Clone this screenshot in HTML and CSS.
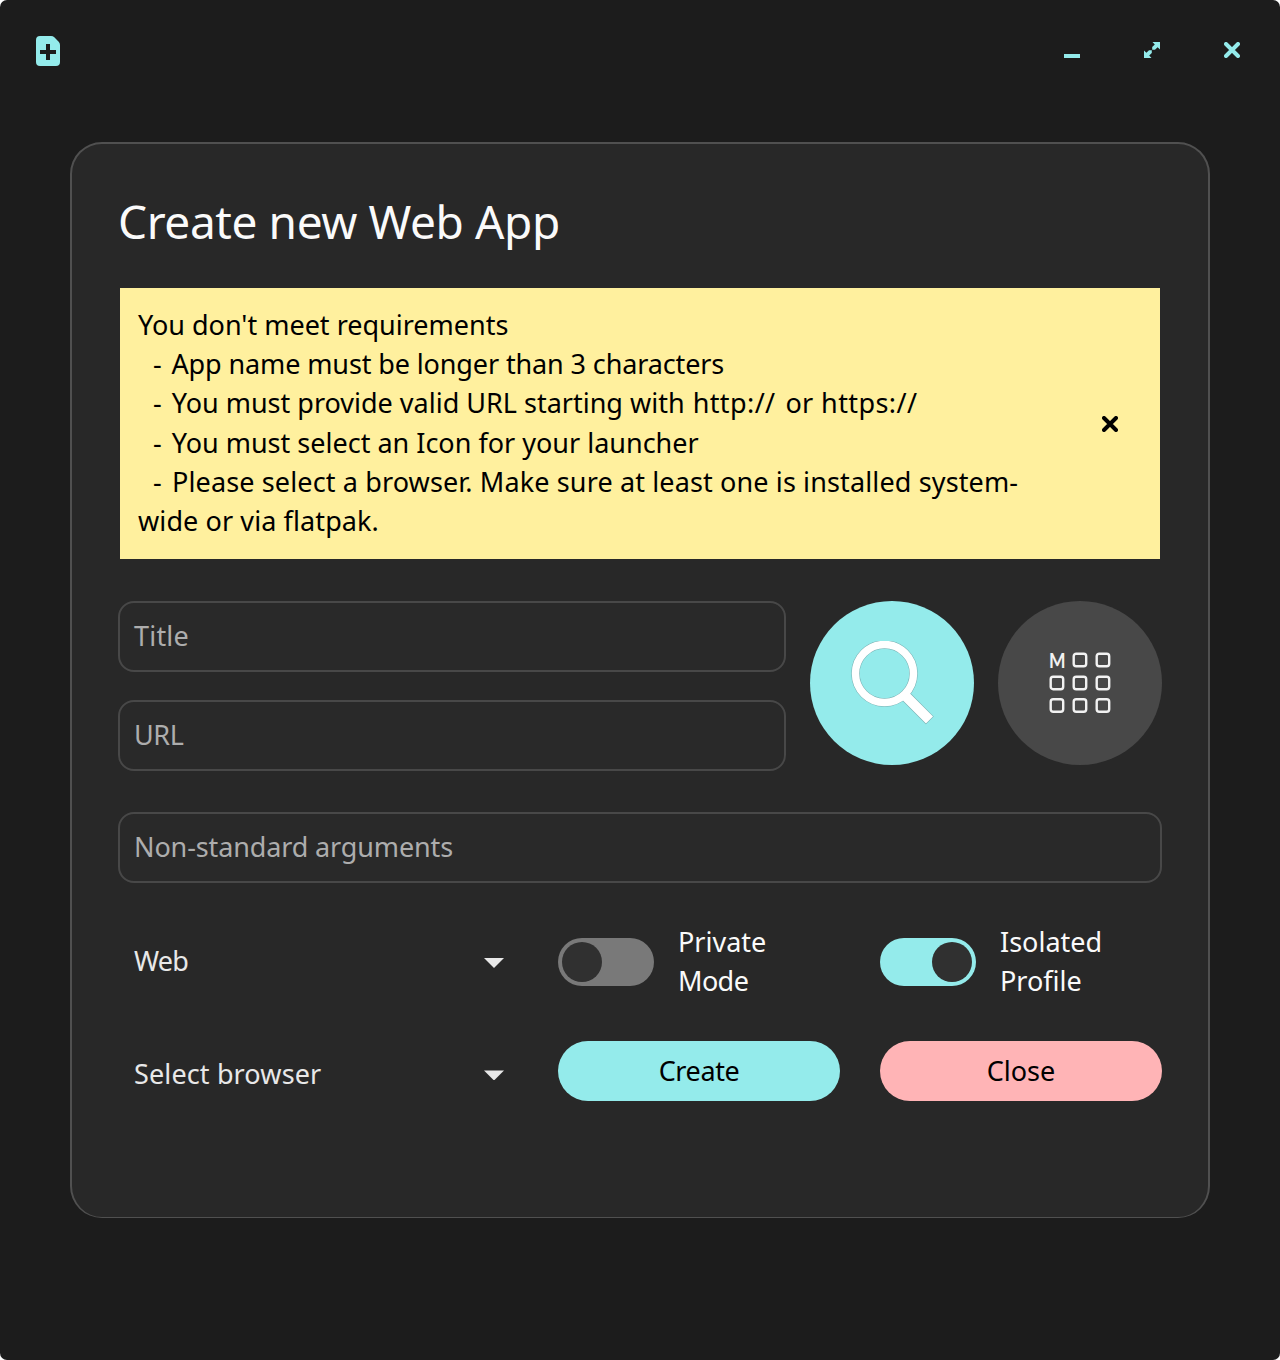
FILE: index.html
```html
<!DOCTYPE html>
<html lang="en">
<head>
<meta charset="utf-8">
<title>Create new Web App</title>
<link rel="stylesheet" href="styles.css">
</head>
<body>
<div class="window">
  <header class="titlebar">
    <button class="icon-button" aria-label="New app">
      <svg width="24" height="30" viewBox="0 0 24 30"><path fill="currentColor" fill-rule="evenodd" d="M4 0H15Q17 0 18.300 1.300L22.700 5.700Q24 7 24 9V26Q24 30 20 30H4Q0 30 0 26V4Q0 0 4 0ZM10 8V14H4V18H10V24H14V18H20V14H14V8Z"/></svg>
    </button>
    <div class="controls">
      <button class="icon-button" aria-label="Minimize">
        <svg width="16" height="16" viewBox="0 0 16 16"><path fill="currentColor" d="M0 12H16V16H0Z"/></svg>
      </button>
      <button class="icon-button" aria-label="Maximize">
        <svg width="16" height="16" viewBox="0 0 16 16"><path fill="currentColor" d="M8.500 0H16V7.500L13.600 5.200L11 7.800H8.200V5L10.800 2.400ZM0 8.500L2.400 10.800L5 8.200H7.800V11L5.200 13.600L7.500 16H0Z"/></svg>
      </button>
      <button class="icon-button" aria-label="Close window">
        <svg width="16" height="16" viewBox="0 0 16 16"><path stroke="currentColor" stroke-width="4" stroke-linecap="round" d="M2 2L14 14M14 2L2 14"/></svg>
      </button>
    </div>
  </header>

  <main class="card">
    <h1 class="heading">Create new Web App</h1>

    <section class="warning">
      <div class="warning-text">
        <p class="w1">You don't meet requirements</p>
        <p class="indent w2"><span class="dash">- </span>App name must be longer than 3 characters</p>
        <p class="indent w3"><span class="dash">- </span>You must provide valid URL starting with <span class="scheme">http://</span> or <span class="scheme">https://</span></p>
        <p class="indent w4"><span class="dash">- </span>You must select an Icon for your launcher</p>
        <p class="indent w5"><span class="dash">- </span>Please select a browser. Make sure at least one is installed system-</p>
        <p class="w6">wide or via flatpak.</p>
      </div>
      <button class="dismiss" aria-label="Dismiss">
        <svg width="16" height="16" viewBox="0 0 16 16"><path stroke="currentColor" stroke-width="4" stroke-linecap="round" d="M2 2L14 14M14 2L2 14"/></svg>
      </button>
    </section>

    <section class="identity">
      <div class="fields">
        <div class="field"><span class="t-title">Title</span></div>
        <div class="field"><span class="t-url">URL</span></div>
      </div>
      <button class="round search" aria-label="Find icon">
        <svg width="84" height="84" viewBox="0 0 84 84"><path class="lens-edge" d="M56 55.500L79.800 79.300"/><circle class="lens-edge" cx="34.500" cy="32.500" r="29"/><path class="lens" d="M56 55.500L79.500 79"/><circle class="lens" cx="34.500" cy="32.500" r="29"/></svg>
      </button>
      <button class="round apps" aria-label="Choose icon">
        <svg width="76" height="76" viewBox="-7 -7 76 76">
          <text class="apps-letter" x="0" y="15.500" textLength="16.500" lengthAdjust="spacingAndGlyphs">M</text>
          <g class="tiles">
            <rect x="24.700" y="1.700" width="12.500" height="12.500" rx="2.500"/><rect x="47.700" y="1.700" width="12.500" height="12.500" rx="2.500"/>
            <rect x="1.700" y="24.700" width="12.500" height="12.500" rx="2.500"/><rect x="24.700" y="24.700" width="12.500" height="12.500" rx="2.500"/><rect x="47.700" y="24.700" width="12.500" height="12.500" rx="2.500"/>
            <rect x="1.700" y="47.300" width="12.500" height="12.500" rx="2.500"/><rect x="24.700" y="47.300" width="12.500" height="12.500" rx="2.500"/><rect x="47.700" y="47.300" width="12.500" height="12.500" rx="2.500"/>
          </g>
        </svg>
      </button>
    </section>

    <div class="field arguments"><span class="t-args">Non-standard arguments</span></div>

    <section class="options">
      <div class="dropdown"><span class="t-web">Web</span><i class="arrow"></i></div>
      <div class="option"><span class="switch"><i class="knob"></i></span><span class="label"><span class="t-private">Private</span><span class="t-mode">Mode</span></span></div>
      <div class="option"><span class="switch on"><i class="knob"></i></span><span class="label"><span class="t-isolated">Isolated</span><span class="t-profile">Profile</span></span></div>
    </section>

    <section class="options actions">
      <div class="dropdown browser"><span class="t-browser">Select browser</span><i class="arrow"></i></div>
      <button class="pill create"><span class="t-create">Create</span></button>
      <button class="pill close"><span class="t-close">Close</span></button>
    </section>
  </main>
</div>
</body>
</html>
```
FILE: styles.css
```css
* { box-sizing: border-box; }
body { margin: 0; background: #fff; font-family: "Noto Sans", sans-serif; font-size: 27px; line-height: 39.2px; color: #fafafa; }
button { border: 0; padding: 0; background: none; color: inherit; font: inherit; }
svg { display: block; fill: none; }
p { margin: 0; }
span { white-space: nowrap; }
.window { width: 1280px; height: 1360px; border-radius: 7px; background: #1c1c1c; padding: 0 0 142px; }
.titlebar { height: 142px; padding: 35px 32px 0; display: flex; justify-content: space-between; align-items: flex-start; color: #94ebeb; }
.icon-button { width: 32px; height: 32px; display: grid; place-items: center; }
.controls { display: flex; gap: 48px; margin: -1px 0 0; }
.card { width: 1140px; height: 1076px; margin: 0 70px; padding: 56px 46px 0; border: 2px solid #505050; border-bottom-width: 1px; border-radius: 32px; background: #282828; }
.heading { margin: 0 0 56px; height: 32px; line-height: 42px; font-size: 46px; font-weight: 400; letter-spacing: -0.4px; white-space: nowrap; }
.warning { margin: 0 2px; height: 271px; padding: 17px 42px 0 18px; background: #fff09e; color: #000; display: flex; justify-content: space-between; }
.warning-text { white-space: nowrap; }
.indent { padding-left: 15px; }
.dash { margin-right: 3px; }
.w2 { letter-spacing: -0.12px; }
.w5 { letter-spacing: 0.13px; }
.w6 { letter-spacing: 0.1px; }
.scheme { margin: 0 3px 0 1px; letter-spacing: 0.4px; }
.dismiss { width: 16px; margin: 0 0 17px; display: grid; place-items: center; }
.identity { margin-top: 42px; display: grid; grid-template-columns: 668px 164px 164px; gap: 24px; height: 170px; }
.fields { display: flex; flex-direction: column; justify-content: space-between; }
.field { height: 71px; border: 2px solid #484848; border-radius: 16px; background: #292929; color: #adadad; padding: 0 14px 2px; display: flex; align-items: center; }
.t-title { letter-spacing: 0.2px; }
.t-url { letter-spacing: -0.4px; }
.t-args { letter-spacing: -0.13px; }
.t-web { letter-spacing: -0.8px; }
.t-mode { letter-spacing: -0.6px; }
.t-browser { letter-spacing: 0.13px; }
.t-create { letter-spacing: -0.4px; }
.round { width: 164px; height: 164px; border-radius: 50%; display: grid; place-items: center; }
.search { background: #94ebeb; }
.apps { background: #484848; }
.lens-edge { stroke: #74aeb0; stroke-width: 8.500; }
.lens { stroke: #fff; stroke-width: 7.500; }
path.lens { stroke-width: 10; }
path.lens-edge { stroke-width: 11; }
.apps-letter { font: 700 20px "Lato", sans-serif; fill: #f2f2f2; }
.tiles { stroke: #f2f2f2; stroke-width: 2.400; }
.arguments { margin-top: 41px; }
.options { display: grid; grid-template-columns: 400px 282px 282px; grid-template-rows: 78px; gap: 40px; height: 78px; margin-top: 40px; align-items: center; }
.dropdown { display: flex; align-items: center; justify-content: space-between; padding: 0 14px 2px 16px; color: #e8e8e8; }
.arrow { width: 20px; height: 10px; background: #e8e8e8; clip-path: polygon(0 0, 100% 0, 50% 100%); margin-top: 4px; }
.option { display: flex; align-items: center; gap: 24px; }
.switch { width: 96px; height: 48px; border-radius: 24px; padding: 4px; background: #797979; display: flex; }
.switch.on { background: #94ebeb; justify-content: flex-end; }
.knob { width: 40px; height: 40px; border-radius: 50%; background: #303030; }
.label { display: flex; flex-direction: column; padding-bottom: 2px; }
.actions { height: 60px; grid-template-rows: 60px; }
.browser { padding-top: 7px; }
.pill { height: 60px; border-radius: 30px; color: #000; padding-bottom: 1px; }
.create { background: #94ebeb; }
.close { background: #ffb4b6; }
```
